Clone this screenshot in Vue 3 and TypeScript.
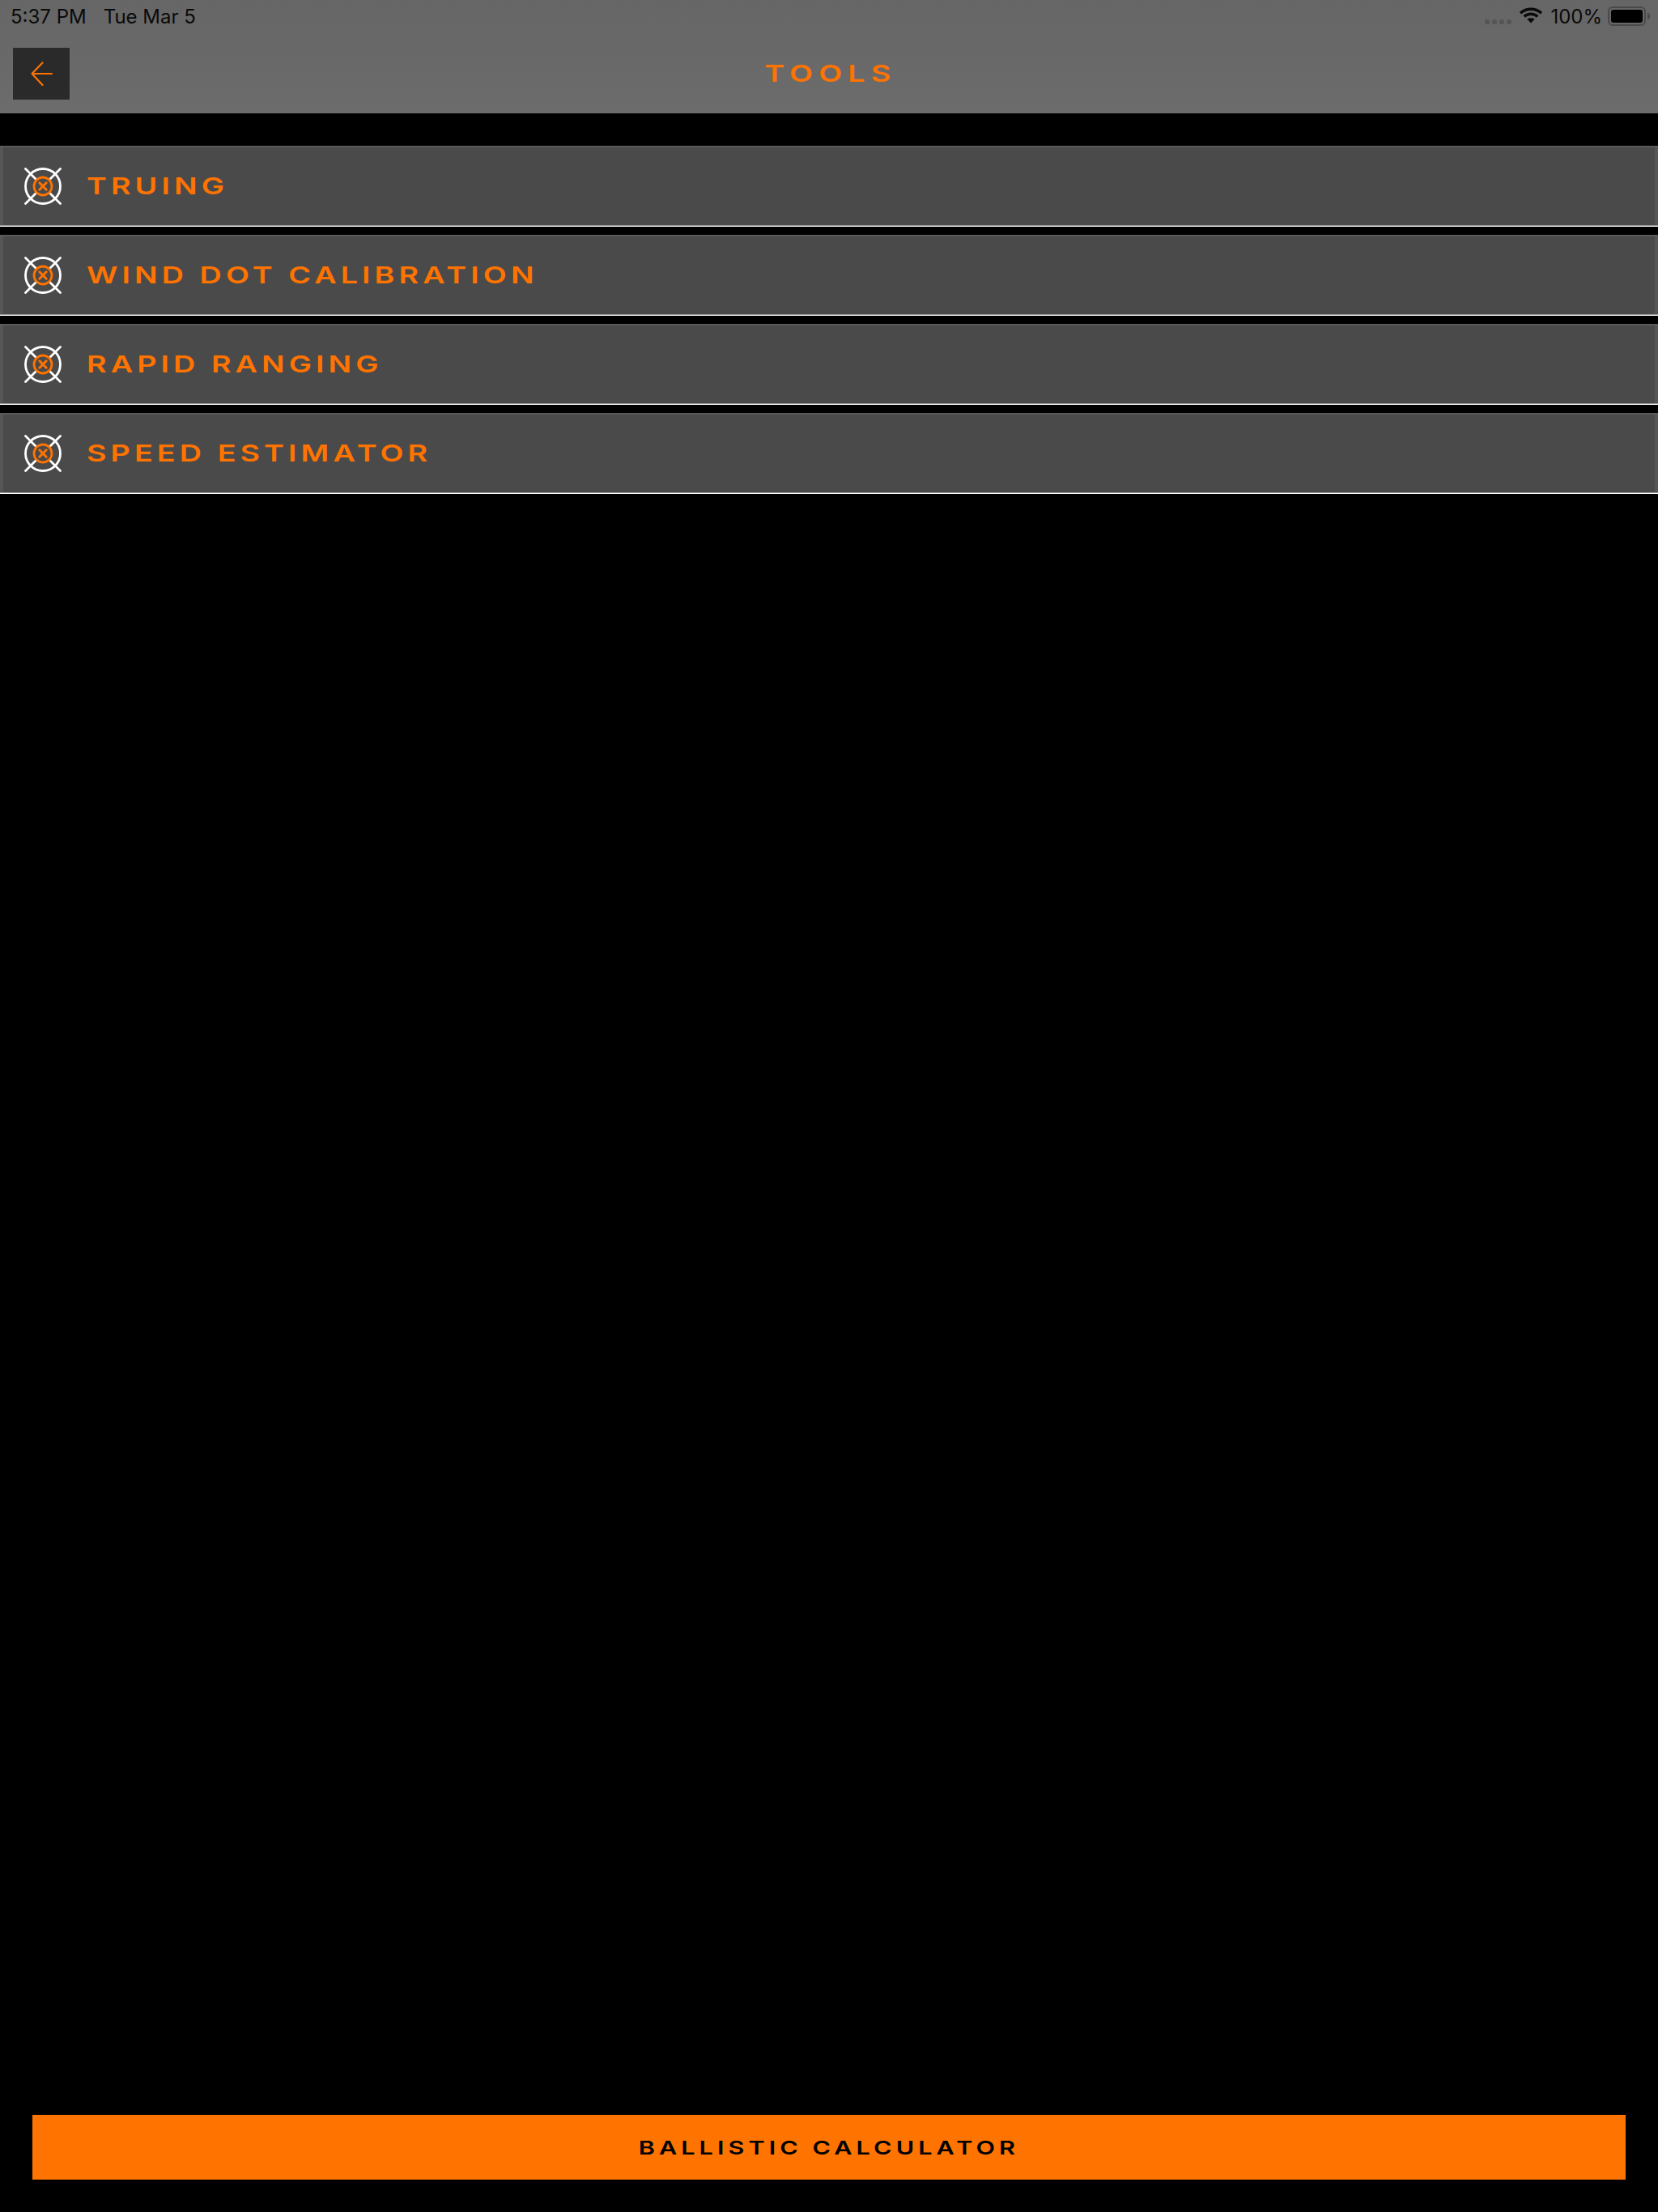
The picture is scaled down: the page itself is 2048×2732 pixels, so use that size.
<script setup lang="ts">
const tools = ['TRUING', 'WIND DOT CALIBRATION', 'RAPID RANGING', 'SPEED ESTIMATOR']
</script>

<template>
  <div class="page">
    <header class="top">
      <div class="status">
        <span class="clock">5:37 PM</span>
        <span class="date">Tue Mar 5</span>
        <span class="signal"><i></i><i></i><i></i><i></i></span>
        <svg class="wifi" width="28" height="20" viewBox="0 0 28 20">
          <path d="M1 7.2C8.4.6 19.6.6 27 7.2" fill="none" stroke="#0a0a0a" stroke-width="3.4" />
          <path d="M5.6 11.4c5-4.2 11.8-4.200 16.800 0" fill="none" stroke="#0a0a0a" stroke-width="3.4" />
          <path d="M9.2 14.600c3-1.900 6.600-1.900 9.600 0L14 19.600z" fill="#0a0a0a" />
        </svg>
        <span class="pct">100%</span>
        <span class="battery"><b></b></span>
        <span class="nub"></span>
      </div>
      <div class="nav">
        <button class="back">
          <svg width="27" height="30" viewBox="0 0 27 30">
            <path d="M14.500 1.500 1.500 15 14.500 29M1.500 15H26" fill="none" stroke="#ff7300" stroke-width="2.2" stroke-linecap="round" stroke-linejoin="round" />
          </svg>
        </button>
        <div class="title"><span class="wide">TOOLS</span></div>
      </div>
    </header>

    <ul class="list">
      <li v-for="t in tools" :key="t" class="row">
        <svg class="target" width="46" height="46" viewBox="0 0 46 46">
          <circle cx="23" cy="23" r="21.500" fill="none" stroke="#fff" stroke-width="2.800" />
          <path d="M1.500 1.500 14 14M44.500 1.500 32 14M1.500 44.500 14 32M44.500 44.500 32 32" stroke="#fff" stroke-width="2.800" stroke-linecap="round" />
          <circle cx="23" cy="23" r="11" fill="none" stroke="#ff7300" stroke-width="2.800" />
          <path d="M18.800 18.800 27.200 27.200M27.200 18.800 18.800 27.200" stroke="#ff7300" stroke-width="3" stroke-linecap="round" />
        </svg>
        <span class="wide label">{{ t }}</span>
      </li>
    </ul>

    <div class="bottom">
      <button class="calc"><span class="wide">BALLISTIC CALCULATOR</span></button>
    </div>
  </div>
</template>

<style>
html, body { background: #000; }
</style>

<style scoped>
.page {
  height: 2732px; background: #000; display: flex; flex-direction: column;
  font-family: "Inter", "Liberation Sans", sans-serif;
}
.top { height: 140px; background: linear-gradient(#666, #6c6c6c); flex: none; }
.status {
  height: 40px; display: flex; align-items: center; padding: 0 10px 0 13px;
  font-size: 24px; color: #0a0a0a;
}
.date { margin-left: 21px; }
.signal { margin-left: auto; margin-top: 14px; display: flex; gap: 3px; }
.signal i { width: 6px; height: 6px; border-radius: 2px; background: #555; }
.wifi { margin-left: 10px; margin-top: -2px; }
.pct { margin-left: 10px; }
.battery {
  margin-left: 7px; width: 47px; height: 24px; box-sizing: border-box;
  border: 2px solid #4a4a4a; border-radius: 6px; padding: 2px; display: flex;
}
.battery b { flex: 1; background: #000; border-radius: 3px; }
.nub { width: 3px; height: 8px; background: #4a4a4a; border-radius: 0 3px 3px 0; margin-left: 2px; }

.nav { height: 100px; position: relative; display: flex; align-items: center; justify-content: center; }
.back {
  position: absolute; left: 16px; top: 19px; width: 70px; height: 64px; border: 0; padding: 0;
  background: #2a2a2a; display: flex; align-items: center; justify-content: center;
}
.title { font-size: 29px; color: #ff7300; letter-spacing: 5.500px; padding: 1px 0 0 4px; }

.wide { display: inline-block; transform: scaleX(1.3); transform-origin: center; font-weight: 600; }

.list { list-style: none; margin: 40px 0 0; padding: 0; display: flex; flex-direction: column; gap: 10px; }
.row {
  height: 100px; box-sizing: border-box;
  background:
    linear-gradient(90deg, #565656 4px, transparent 4px),
    linear-gradient(270deg, #565656 4px, transparent 4px),
    #4a4a4a;
  border-top: 2px solid #5a5a5a;
  border-bottom: 1px solid #fff;
  box-shadow: inset 0 -1px 0 #9a9a9a;
  display: flex; align-items: center; padding: 0 0 2px 30px; gap: 31px;
}
.label { font-size: 29px; color: #ff7300; letter-spacing: 3.900px; transform-origin: left center; }

.bottom { margin-top: auto; padding: 0 40px 40px; }
.calc {
  width: 100%; height: 80px; border: 0; padding: 0; background: #ff7300; color: #000;
  font-family: inherit; font-size: 23.500px; letter-spacing: 3.900px;
}
</style>
